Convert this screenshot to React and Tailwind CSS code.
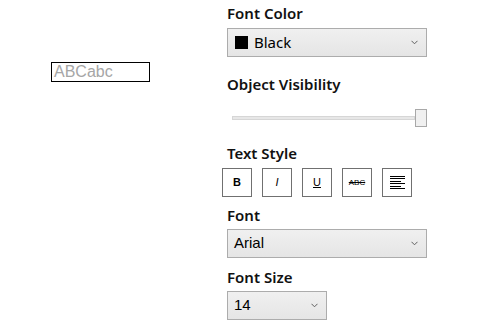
function Chevron() {
  return (
    <svg width="7" height="5" viewBox="0 0 7 5" className="text-[#606060]">
      <path d="M0.5 0.8 L3.5 3.8 L6.5 0.8" fill="none" stroke="currentColor" strokeWidth="1" />
    </svg>
  )
}

function Select({ width, children }) {
  return (
    <div
      className="flex items-center justify-between h-[29px] border border-[#acacac] bg-gradient-to-b from-[#f0f0f0] to-[#e5e5e5] pl-[6px] pr-[8px]"
      style={{ width }}
    >
      <div className="flex items-center text-[15px] text-black">{children}</div>
      <Chevron />
    </div>
  )
}

function Label({ children, className = '' }) {
  return (
    <div className={`h-[22px] flex items-center text-[15px] font-semibold text-[#111] leading-none ${className}`}>
      {children}
    </div>
  )
}

function StyleButton({ children }) {
  return (
    <div className="w-[30px] h-[29px] border-[1.5px] border-[#707070] flex items-center justify-center bg-white text-black">
      {children}
    </div>
  )
}

export default function App() {
  return (
    <div className="w-[480px] h-[330px] bg-white flex overflow-hidden" style={{ fontFamily: '"Noto Sans", "Open Sans", sans-serif' }}>
      <div className="w-[227px] pl-[51px] pt-[62px]">
        <div className="w-[99px] h-[20px] border border-black flex items-center px-[2px] text-[16px] leading-none text-[#a6a6a6]" style={{ fontFamily: '"Liberation Sans", Arial, sans-serif' }}>
          ABCabc
        </div>
      </div>

      <div className="flex flex-col pt-[2px]">
        <Label>Font Color</Label>
        <div className="mt-[4px]">
          <Select width={200}>
            <span className="w-[13px] h-[13px] bg-black mr-[6px] ml-[1px]" />
            <span>Black</span>
          </Select>
        </div>

        <Label className="mt-[16px]">Object Visibility</Label>
        <div className="mt-[14px] h-[18px] w-[200px] flex items-center pl-[5px]">
          <div className="flex-1 h-[4px] bg-[#e7e7e7] border border-[#d6d6d6]" />
          <div className="w-[12px] h-[18px] bg-[#f0f0f0] border border-[#a8a8a8]" />
        </div>

        <Label className="mt-[15px]">Text Style</Label>
        <div className="mt-[4px] -ml-[5px] flex gap-[10px]">
          <StyleButton>
            <span className="text-[11px] font-bold" style={{ fontFamily: '"Liberation Sans", sans-serif' }}>B</span>
          </StyleButton>
          <StyleButton>
            <span className="text-[11px] italic font-light" style={{ fontFamily: '"Liberation Sans", sans-serif' }}>I</span>
          </StyleButton>
          <StyleButton>
            <span className="text-[11px] underline" style={{ fontFamily: '"Liberation Sans", sans-serif' }}>U</span>
          </StyleButton>
          <StyleButton>
            <span className="text-[8px] line-through" style={{ fontFamily: '"Liberation Sans", sans-serif' }}>ABC</span>
          </StyleButton>
          <StyleButton>
            <svg width="15" height="14" viewBox="0 0 15 14">
              <path d="M0 0.5H15M0 2.5H15M0 5.5H11M0 7.5H15M0 10.5H11M0 12.5H15" stroke="black" strokeWidth="1" />
            </svg>
          </StyleButton>
        </div>

        <Label className="mt-[7px]">Font</Label>
        <div className="mt-[3px]">
          <Select width={200}>
            <span style={{ fontFamily: '"Liberation Sans", Arial, sans-serif' }}>Arial</span>
          </Select>
        </div>

        <Label className="mt-[8px]">Font Size</Label>
        <div className="mt-[3px]">
          <Select width={100}>
            <span style={{ fontFamily: '"Liberation Sans", Arial, sans-serif' }}>14</span>
          </Select>
        </div>
      </div>
    </div>
  )
}
